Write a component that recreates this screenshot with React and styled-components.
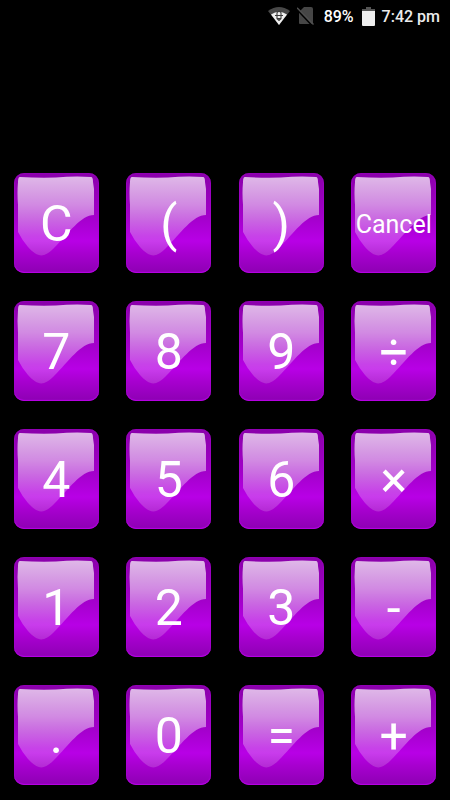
import styled, { createGlobalStyle } from "styled-components";

const GlobalStyle = createGlobalStyle`
  body {
    margin: 0;
    background: #000;
    color: #fff;
    font-family: Roboto, sans-serif;
  }
`;

const Screen = styled.div`
  display: flex;
  flex-direction: column;
  min-height: 100vh;
`;

const StatusBar = styled.header`
  display: flex;
  align-items: center;
  justify-content: flex-end;
  height: 32px;
  padding: 0 10px;
  color: #ececec;
  font-size: 16px;
  font-weight: 500;

  svg {
    display: block;
    margin-right: 7px;
  }
`;

const Percent = styled.span`
  margin: 0 8px 0 2px;
  color: #fff;
`;

const Display = styled.output`
  display: block;
  flex: 1;
  padding: 0 16px;
  text-align: right;
  font-size: 50px;
`;

const Keypad = styled.main`
  display: grid;
  grid-template-columns: repeat(4, 1fr);
  justify-items: center;
  row-gap: 28px;
  padding: 14px 0 15px;
`;

const Key = styled.button`
  position: relative;
  width: 85px;
  height: 100px;
  padding: 2px 0 0;
  overflow: hidden;
  border: 0;
  border-radius: 10px;
  background: linear-gradient(
    #8a00aa 0%,
    #9500b8 20%,
    #a400cc 45%,
    #b800e6 68%,
    #a800d0 80%,
    #9000b6 98%
  );
  box-shadow: inset 0 -1px 1px #b800e6, inset 0 0 2px #a800d0;
  color: #fff;
  font-family: inherit;
  font-size: ${({ $small }) => ($small ? "25px" : "50px")};
  white-space: nowrap;
  cursor: pointer;
`;

const Gloss = styled.svg`
  position: absolute;
  inset: 0;
`;

const Label = styled.span`
  position: relative;
`;

const keys = [
  "C", "(", ")", "Cancel",
  "7", "8", "9", "÷",
  "4", "5", "6", "×",
  "1", "2", "3", "-",
  ".", "0", "=", "+",
];

const WifiIcon = () => (
  <svg width="22" height="18" viewBox="0 0 22 18" aria-hidden="true">
    <path d="M0 4Q11-4 22 4L11 18Z" fill="#484848" />
    <path d="M3 7.5Q11 2 19 7.5L11 18Z" fill="#f0f0f0" />
    <path
      d="M9 5.5v6M13 5.5v6M7 8.5h8M8.5 11.5h5M9 5.5l2-1.5 2 1.5M9 11.5l2 2 2-2"
      fill="none"
      stroke="#3c3c3c"
      strokeWidth="1.1"
    />
  </svg>
);

const NoSimIcon = () => (
  <svg width="18" height="18" viewBox="0 0 18 18" aria-hidden="true">
    <path d="M7 0h7q2 0 2 2v14q0 1-1 1H3q-1 0-1-1V5Z" fill="#464646" />
    <path d="M0 2.5L15.500 19" stroke="#000" strokeWidth="1.6" />
    <path d="M0 .8L16.5 17.5" stroke="#505050" strokeWidth="1.4" />
  </svg>
);

const BatteryIcon = () => (
  <svg width="13" height="19" viewBox="0 0 13 19" aria-hidden="true">
    <path d="M4 0h5v2h4v3H0V2h4Z" fill="#555" />
    <path d="M0 4h13v14q0 1-1 1H1q-1 0-1-1Z" fill="#eee" />
  </svg>
);

// Bright upper sheet with the wave cut along its bottom edge
const KeyGloss = () => (
  <Gloss width="85" height="100" viewBox="0 0 85 100" aria-hidden="true">
    <path
      d="M6 4Q24 5 42 4.500Q60 3 77 4Q79 4 79 9L80 16V42C67 42 55 60 40 75C30 85 24 85 14 74Q8 67 4 59V32Q3 20 4 9Q4 4 6 4Z"
      fill="url(#gloss)"
    />
  </Gloss>
);

const App = () => {
  return (
    <Screen>
      <GlobalStyle />
      <StatusBar>
        <WifiIcon />
        <NoSimIcon />
        <Percent>89%</Percent>
        <BatteryIcon />
        <time>7:42 pm</time>
      </StatusBar>
      <Display aria-label="Result" />
      <Keypad>
        {keys.map((label) => (
          <Key key={label} type="button" $small={label.length > 1}>
            <KeyGloss />
            <Label>{label}</Label>
          </Key>
        ))}
      </Keypad>
      <Gloss width="0" height="0" aria-hidden="true">
        <defs>
          <linearGradient id="gloss" x1="0" y1="4" x2="0" y2="83" gradientUnits="userSpaceOnUse">
            <stop offset="0" stopColor="#fff" stopOpacity="0.72" />
            <stop offset="0.35" stopColor="#fff" stopOpacity="0.54" />
            <stop offset="0.75" stopColor="#fff" stopOpacity="0.26" />
            <stop offset="1" stopColor="#fff" stopOpacity="0.16" />
          </linearGradient>
        </defs>
      </Gloss>
    </Screen>
  );
};

export default App;
